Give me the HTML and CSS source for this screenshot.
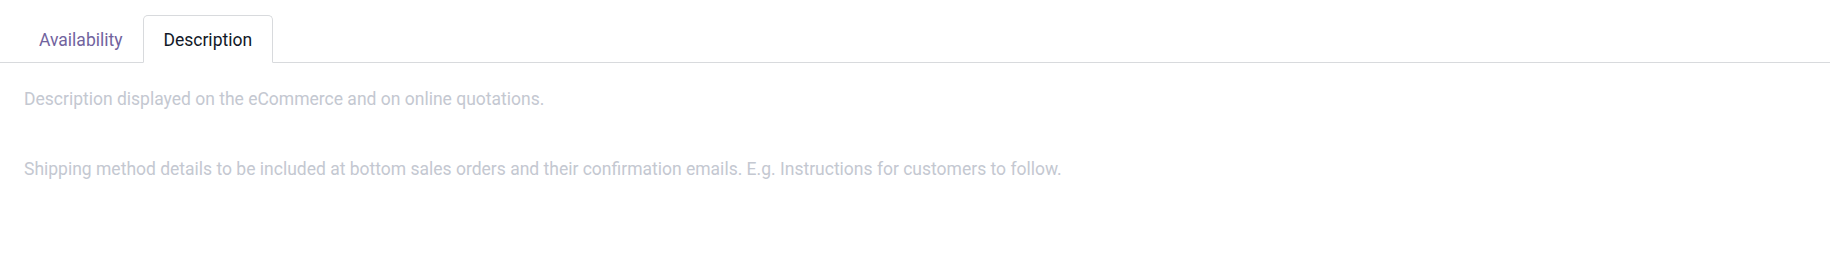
FILE: index.html
```html
<!DOCTYPE html>
<html lang="en">
<head>
<meta charset="utf-8">
<title>Notebook</title>
<link rel="stylesheet" href="styles.css">
</head>
<body>
<div class="notebook">
  <ul class="tabs">
    <li class="tab"><a class="tab-link" href="#">Availability</a></li>
    <li class="tab"><a class="tab-link active" href="#">Description</a></li>
  </ul>
  <div class="tab-pane">
    <div class="field placeholder">Description displayed on the eCommerce and on online quotations.</div>
    <div class="field placeholder">Shipping method details to be included at bottom sales orders and their confirmation emails. E.g. Instructions for customers to follow.</div>
  </div>
</div>
</body>
</html>
```
FILE: styles.css
```css
html, body {
  margin: 0;
  background: #ffffff;
}
body {
  font-family: Roboto, "Liberation Sans", sans-serif;
  font-size: 17.5px;
  line-height: 26px;
  color: #111827;
}
.notebook {
  padding-top: 15px;
}
.tabs {
  display: flex;
  list-style: none;
  margin: 0;
  padding: 0 0 0 18.5px;
  border-bottom: 1px solid #d8dadd;
}
.tab {
  margin-bottom: -1px;
}
.tab-link {
  display: block;
  padding: 11px 19.5px 9px;
  border: 1px solid transparent;
  border-radius: 5px 5px 0 0;
  color: #71639e;
  text-decoration: none;
}
.tab-link.active {
  color: #111827;
  background: #ffffff;
  border-color: #d8dadd #d8dadd #ffffff;
}
.tab-pane {
  display: flex;
  flex-direction: column;
  gap: 44px;
  padding: 23px 24px 0;
}
.placeholder {
  color: #c4c8d1;
}
```
